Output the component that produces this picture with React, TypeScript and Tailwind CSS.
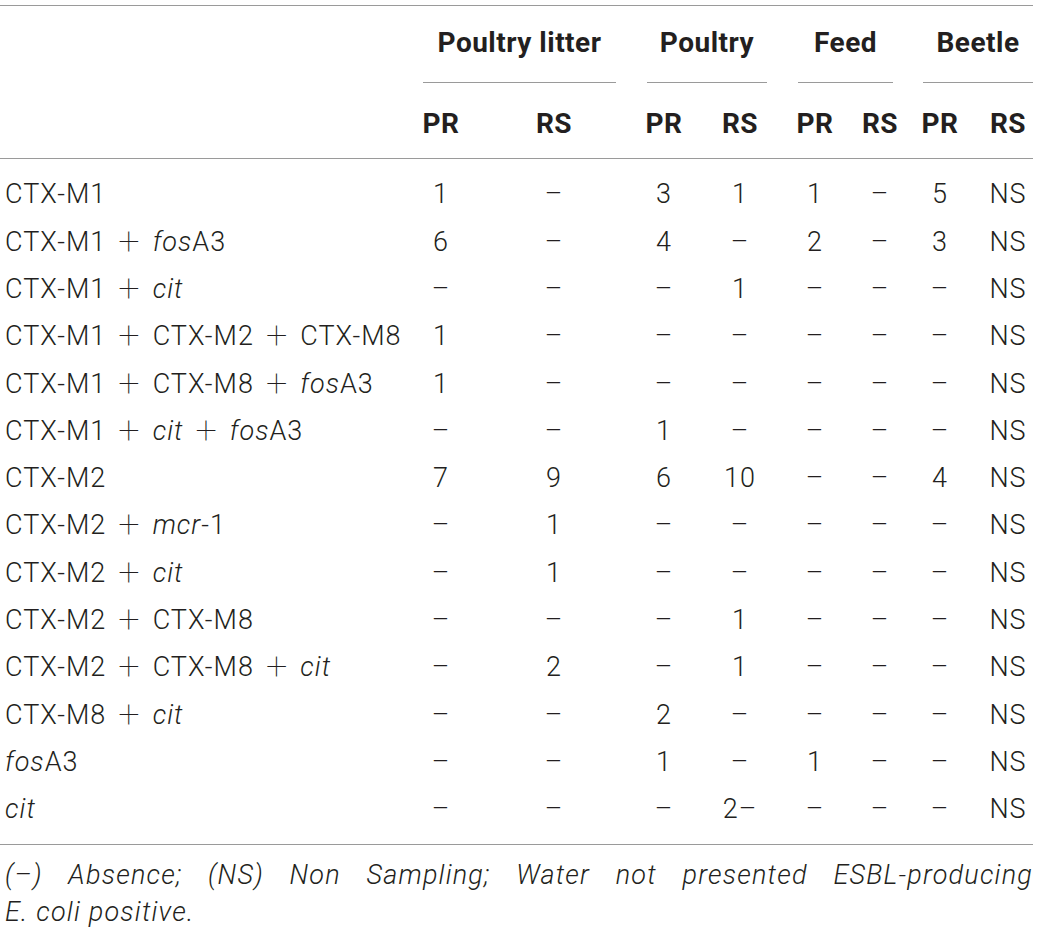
import React from 'react';

type Row = { label: string; values: string[] };

const rows: Row[] = [
  { label: 'CTX-M1', values: ['1', '–', '3', '1', '1', '–', '5', 'NS'] },
  { label: 'CTX-M1 + _fos_A3', values: ['6', '–', '4', '–', '2', '–', '3', 'NS'] },
  { label: 'CTX-M1 + _cit_', values: ['–', '–', '–', '1', '–', '–', '–', 'NS'] },
  { label: 'CTX-M1 + CTX-M2 + CTX-M8', values: ['1', '–', '–', '–', '–', '–', '–', 'NS'] },
  { label: 'CTX-M1 + CTX-M8 + _fos_A3', values: ['1', '–', '–', '–', '–', '–', '–', 'NS'] },
  { label: 'CTX-M1 + _cit_ + _fos_A3', values: ['–', '–', '1', '–', '–', '–', '–', 'NS'] },
  { label: 'CTX-M2', values: ['7', '9', '6', '10', '–', '–', '4', 'NS'] },
  { label: 'CTX-M2 + _mcr_-1', values: ['–', '1', '–', '–', '–', '–', '–', 'NS'] },
  { label: 'CTX-M2 + _cit_', values: ['–', '1', '–', '–', '–', '–', '–', 'NS'] },
  { label: 'CTX-M2 + CTX-M8', values: ['–', '–', '–', '1', '–', '–', '–', 'NS'] },
  { label: 'CTX-M2 + CTX-M8 + _cit_', values: ['–', '2', '–', '1', '–', '–', '–', 'NS'] },
  { label: 'CTX-M8 + _cit_', values: ['–', '–', '2', '–', '–', '–', '–', 'NS'] },
  { label: '_fos_A3', values: ['–', '–', '1', '–', '1', '–', '–', 'NS'] },
  { label: '_cit_', values: ['–', '–', '–', '2–', '–', '–', '–', 'NS'] },
];

const groups = [
  { name: 'Poultry litter', cls: 'col-span-2 ml-[23px] mr-[10px]' },
  { name: 'Poultry', cls: 'col-span-2 ml-[21px] mr-[11px]' },
  { name: 'Feed', cls: 'col-span-2 ml-[20px] mr-[15px]' },
  { name: 'Beetle', cls: 'col-span-2 ml-[15px]' },
];

// the last column sits a little right of its cell centre in the original
const cellPad = ['', '', '', '', '', '', '', 'pl-[11px]'];

const cols = 'grid grid-cols-[400px_82px_144px_76px_76px_74px_56px_64px_61px]';

// "_x_" marks italic, " + " gets the wide thin plus
function Label({ text }: { text: string }) {
  const pieces = text.split(' + ');
  return (
    <span>
      {pieces.map((p, i) => (
        <React.Fragment key={i}>
          {i > 0 && (
            <span className="mx-[12px] inline-block align-[-3px] text-[38px] leading-none font-thin">+</span>
          )}
          {p.split('_').map((s, j) =>
            j % 2 === 1 ? (
              <i key={j}>{s}</i>
            ) : (
              <React.Fragment key={j}>{s}</React.Fragment>
            )
          )}
        </React.Fragment>
      ))}
    </span>
  );
}

export default function App() {
  return (
    <div className="min-h-[931px] bg-white pt-[5px] text-[#231f20] font-['Roboto','Liberation_Sans',sans-serif]">
      <div className="w-[1033px]">
        <div className="border-t border-[#9a9a9a]" />

        <div className={`${cols} h-[77px]`}>
          <div />
          {groups.map((g) => (
            <div
              key={g.name}
              className={`${g.cls} flex items-center justify-center border-b border-[#9a9a9a] pb-[3px] text-[28px] font-bold tracking-[0.5px] whitespace-nowrap`}
            >
              {g.name}
            </div>
          ))}
        </div>

        <div className={`${cols} h-[75px] items-center pt-[6px] text-[28px] font-bold tracking-[0.5px]`}>
          <div />
          {['PR', 'RS', 'PR', 'RS', 'PR', 'RS', 'PR', 'RS'].map((h, i) => (
            <div key={i} className={`text-center ${cellPad[i]}`}>
              {h}
            </div>
          ))}
        </div>
        <div className="border-t border-[#9a9a9a]" />

        <div className="pt-[12px] pb-[11px] text-[27px] font-light tracking-[1px]">
          {rows.map((r, idx) => (
            <div key={idx} className={`${cols} h-[47.3px] items-center`}>
              <div className="pl-[5px] whitespace-nowrap">
                <Label text={r.label} />
              </div>
              {r.values.map((v, i) => (
                <div key={i} className={`text-center ${cellPad[i]}`}>
                  {v}
                </div>
              ))}
            </div>
          ))}
        </div>
        <div className="border-t border-[#9a9a9a]" />

        <div className="pt-[12px] pl-[5px] text-[27px] leading-[37px] font-light italic tracking-[1.2px]">
          <div className="text-justify [text-align-last:justify]">
            (–) Absence; (NS) Non Sampling; Water not presented ESBL-producing
          </div>
          <div>E. coli positive.</div>
        </div>
      </div>
    </div>
  );
}
